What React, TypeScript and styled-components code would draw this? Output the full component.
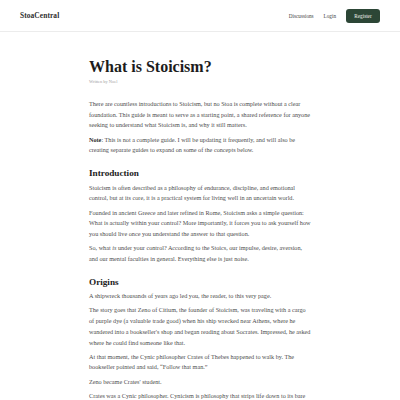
import React from "react";
import styled, { createGlobalStyle } from "styled-components";

const Global = createGlobalStyle`
  html, body { margin: 0; padding: 0; background: #ffffff; }
  body { font-family: "Liberation Serif", "DejaVu Serif", serif; -webkit-font-smoothing: antialiased; }
  * { box-sizing: border-box; }
`;

const Header = styled.header`
  height: 32px;
  border-bottom: 1px solid #ececec;
  display: flex;
  align-items: center;
  justify-content: space-between;
  padding: 0 20px;
`;

const Logo = styled.div`
  font-size: 7.4px;
  font-weight: 700;
  color: #2e2e2e;
  letter-spacing: 0.1px;
`;

const Nav = styled.nav`
  display: flex;
  align-items: center;
  gap: 10px;
`;

const NavLink = styled.a`
  font-size: 5.2px;
  color: #444;
  text-decoration: none;
`;

const RegisterButton = styled.button`
  height: 14px;
  width: 34px;
  border: none;
  border-radius: 3px;
  background: #2c4636;
  color: #f2f2ee;
  font-family: inherit;
  font-size: 5.2px;
  padding: 0;
`;

const Article = styled.main`
  width: 222px;
  margin: 0 auto;
  padding-top: 25px;
`;

const Title = styled.h1`
  margin: 0;
  font-size: 16px;
  line-height: 20px;
  font-weight: 700;
  color: #1c1c1c;
`;

const Byline = styled.div`
  margin-top: 2px;
  font-size: 4.4px;
  line-height: 6px;
  color: #a0a0a0;
`;

const Body = styled.div`
  margin-top: 14px;
`;

const P = styled.p`
  margin: 0 0 3.5px;
  font-size: 6.2px;
  line-height: 10.7px;
  color: #4d4d4d;
`;

const H2 = styled.h2`
  margin: 9px 0 1.65px;
  font-size: 9.2px;
  line-height: 16px;
  font-weight: 700;
  color: #1c1c1c;
`;

const Strong = styled.strong`
  font-weight: 700;
  color: #2a2a2a;
`;

export default function App() {
  return (
    <>
      <Global />
      <Header>
        <Logo>StoaCentral</Logo>
        <Nav>
          <NavLink href="#">Discussions</NavLink>
          <NavLink href="#">Login</NavLink>
          <RegisterButton>Register</RegisterButton>
        </Nav>
      </Header>
      <Article>
        <Title>What is Stoicism?</Title>
        <Byline>Written by Noel</Byline>
        <Body>
          <P>
            There are countless introductions to Stoicism, but no Stoa is complete without a clear
            foundation. This guide is meant to serve as a starting point, a shared reference for anyone
            seeking to understand what Stoicism is, and why it still matters.
          </P>
          <P>
            <Strong>Note</Strong>: This is not a complete guide. I will be updating it frequently, and will
            also be creating separate guides to expand on some of the concepts below.
          </P>
          <H2>Introduction</H2>
          <P>
            Stoicism is often described as a philosophy of endurance, discipline, and emotional control,
            but at its core, it is a practical system for living well in an uncertain world.
          </P>
          <P>
            Founded in ancient Greece and later refined in Rome, Stoicism asks a simple question: What is
            actually within your control? More importantly, it forces you to ask yourself how you should
            live once you understand the answer to that question.
          </P>
          <P>
            So, what <em>is</em> under your control? According to the Stoics, our impulse, desire,
            aversion, and our mental faculties in general. Everything else is just noise.
          </P>
          <H2>Origins</H2>
          <P>A shipwreck thousands of years ago led you, the reader, to this very page.</P>
          <P>
            The story goes that Zeno of Citium, the founder of Stoicism, was traveling with a cargo of
            purple dye (a valuable trade good) when his ship wrecked near Athens, where he wandered into a
            bookseller's shop and began reading about Socrates. Impressed, he asked where he could find
            someone like that.
          </P>
          <P>
            At that moment, the Cynic philosopher Crates of Thebes happened to walk by. The bookseller
            pointed and said, “Follow that man.”
          </P>
          <P>Zeno became Crates' student.</P>
          <P>
            Crates was a Cynic philosopher. Cynicism is philosophy that strips life down to its bare
            essentials, rejecting wealth, status and convention in favour of living in accordance with
            nature.
          </P>
        </Body>
      </Article>
    </>
  );
}
